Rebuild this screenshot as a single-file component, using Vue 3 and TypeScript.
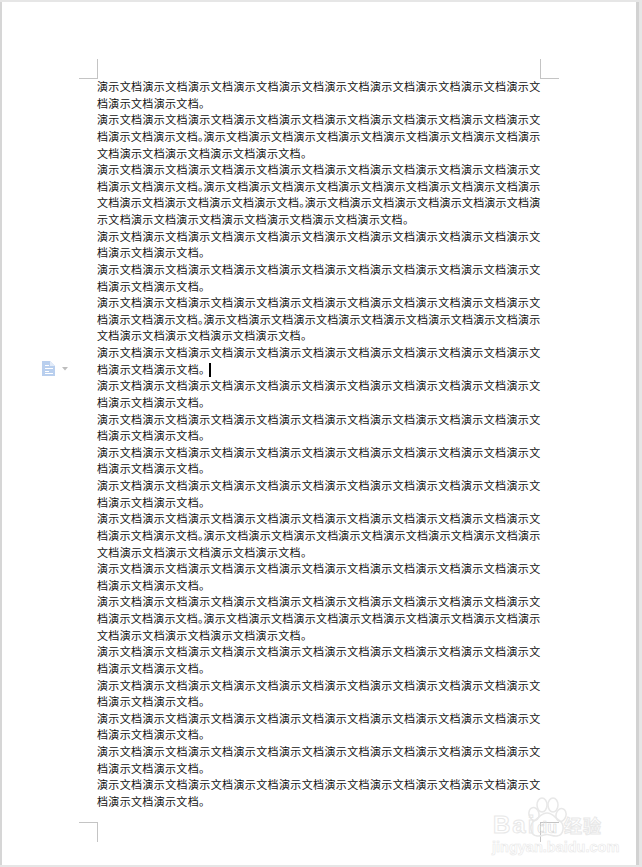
<script setup lang="ts">
interface Line {
  text: string
  tight: boolean
  last: boolean
}

const sentence = '演示文档'.repeat(12) + '。'
const sentenceCounts: number[] = [1, 2, 3, 1, 1, 2, 1, 1, 1, 1, 1, 2, 1, 2, 1, 1, 1, 1, 1]

function splitLines(count: number): Line[] {
  let rest = sentence.repeat(count)
  const lines: Line[] = []
  while (rest.length) {
    // A full-stop inside the line is set half width, which lets one more character fit.
    const head = rest.slice(0, 39)
    const size = head.includes('。') && rest.length > 39 ? 40 : 39
    const text = rest.slice(0, size)
    rest = rest.slice(size)
    lines.push({ text, tight: size === 40, last: rest.length === 0 })
  }
  return lines
}

const paragraphs = sentenceCounts.map(splitLines)

function parts(text: string): string[] {
  return text.split(/(。)/).filter(Boolean)
}
</script>

<template>
  <main class="desk">
    <section class="page">
      <i class="mark tl"></i>
      <i class="mark tr"></i>
      <i class="mark bl"></i>
      <i class="mark br"></i>

      <div class="para-tool">
        <svg width="13" height="15" viewBox="0 0 13 15">
          <path d="M0 0h8l5 5v10H0z" fill="#b9cfee" />
          <path d="M8 0l5 5H8z" fill="#e3ecf9" />
          <path d="M3 4.500h4M3 7.500h8M3 10.500h4M3 12.500h8" stroke="#fff" stroke-width="1" fill="none" />
        </svg>
        <svg width="6" height="4" viewBox="0 0 6 4"><path d="M0 0h6L3 3.500z" fill="#bdbdbd" /></svg>
      </div>

      <article class="body">
        <div v-for="(lines, p) in paragraphs" :key="p" class="para">
          <div
            v-for="(line, l) in lines"
            :key="l"
            class="line"
            :class="{ tight: line.tight, last: line.last }"
          >
            <template v-for="(part, i) in parts(line.text)" :key="i">
              <span v-if="part === '。'" class="stop">{{ part }}</span>
              <template v-else>{{ part }}</template>
            </template>
            <span v-if="p === 6 && line.last" class="caret"></span>
          </div>
        </div>
      </article>
    </section>

    <div class="watermark">
      <svg class="paw" width="44" height="44" viewBox="0 0 44 44">
        <g fill="none" stroke="#e8e8e8" stroke-width="1.500">
          <ellipse cx="8" cy="17" rx="5" ry="6.500" transform="rotate(-15 8 17)" />
          <ellipse cx="16" cy="8" rx="5" ry="7" />
          <ellipse cx="27" cy="8" rx="5" ry="7" />
          <ellipse cx="35" cy="18" rx="5" ry="6.500" transform="rotate(15 35 18)" />
          <path d="M21 16c6 0 8 5 13 8 5 4 4 14-3 15-4 .5-7-1.500-10-1.500s-6 2-10 1.500C4 38 3 28 8 24c5-3 7-8 13-8z" />
        </g>
      </svg>
      <div class="brand">
        <span class="latin">Bai</span><span class="du">du</span><span class="cn">经验</span>
      </div>
      <div class="site">jingyan.baidu.com</div>
    </div>
  </main>
</template>

<style scoped>
.desk {
  position: relative;
  width: 642px;
  height: 867px;
  box-sizing: border-box;
  padding: 2px 6px 2px 2px;
  overflow: hidden;
  background: #e6e6e6;
}

.page {
  position: relative;
  box-sizing: border-box;
  width: 634px;
  height: 863px;
  padding: 76px 0 0 95px;
  background: #fff;
  box-shadow: -2px 0 0 #d6d6d6, 3px 0 0 #d2d2d2;
}

.body {
  width: 443.500px;
  font-family: "Noto Sans CJK SC", sans-serif;
  font-size: 11px;
  line-height: 16.630px;
  color: #111;
}

.line {
  letter-spacing: 0.33px;
  white-space: nowrap;
  text-align: justify;
  text-align-last: justify;
  text-justify: inter-character;
}

.line.tight {
  letter-spacing: 0.2px;
  white-space: normal;
}

.line.last {
  text-align: left;
  text-align-last: left;
}

.stop {
  font-feature-settings: "halt" 1;
  letter-spacing: 0;
}

.caret {
  display: inline-block;
  width: 2px;
  height: 14px;
  margin-left: 5px;
  vertical-align: -3px;
  background: #000;
}

.mark {
  position: absolute;
  border: 0 solid #c4c4c4;
}

.tl { left: 77px; top: 57px; width: 18px; height: 19px; border-width: 0 1px 1px 0; }
.tr { left: 538px; top: 57px; width: 18px; height: 19px; border-width: 0 0 1px 1px; }
.bl { left: 77px; top: 820px; width: 18px; height: 19px; border-width: 1px 1px 0 0; }
.br { left: 538px; top: 820px; width: 18px; height: 19px; border-width: 1px 0 0 1px; }

.para-tool {
  position: absolute;
  left: 40px;
  top: 359px;
  display: flex;
  align-items: center;
  gap: 7px;
}

.watermark {
  position: absolute;
  left: 492px;
  top: 796px;
  width: 116px;
  height: 60px;
  font-family: "Liberation Sans", "Noto Sans CJK SC", sans-serif;
  pointer-events: none;
}

.paw {
  position: absolute;
  left: 34px;
  top: 1px;
}

.brand {
  position: absolute;
  left: 1px;
  top: 18px;
  display: flex;
  align-items: baseline;
  white-space: nowrap;
  font-size: 24px;
  font-weight: 700;
  line-height: 22px;
  color: transparent;
  -webkit-text-stroke: 1px #e8e8e8;
}

.latin {
  letter-spacing: 2px;
}

.du {
  margin-left: 1px;
  font-size: 16px;
  -webkit-text-stroke: 0.7px #dcdcdc;
}

.cn {
  margin-left: 7px;
  font-size: 18px;
  letter-spacing: 1px;
}

.site {
  position: absolute;
  left: 0;
  top: 42px;
  white-space: nowrap;
  font-size: 14.500px;
  line-height: 18px;
  font-weight: 700;
  color: transparent;
  -webkit-text-stroke: 0.6px #e8e8e8;
}
</style>
